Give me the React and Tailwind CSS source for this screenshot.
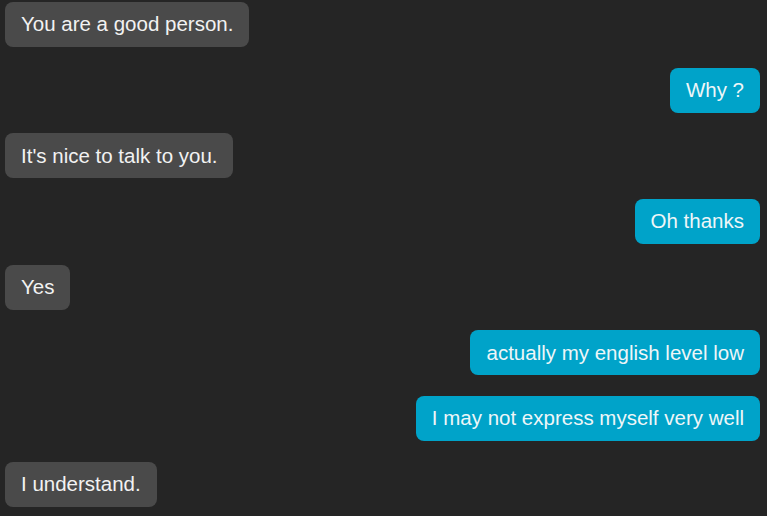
const messages = [
  { text: "You are a good person.", me: false },
  { text: "Why ?", me: true },
  { text: "It's nice to talk to you.", me: false },
  { text: "Oh thanks", me: true },
  { text: "Yes", me: false },
  { text: "actually my english level low", me: true },
  { text: "I may not express myself very well", me: true },
  { text: "I understand.", me: false },
]

function Bubble({ text, me }) {
  return (
    <div className={me ? "flex justify-end" : "flex justify-start"}>
      <div
        className={
          me
            ? "h-[45px] px-4 flex items-center rounded-lg bg-[#00a3c9] text-[#eef6f8] text-[20.5px]"
            : "h-[45px] px-4 flex items-center rounded-lg bg-[#4a4a4a] text-[#f2f2f2] text-[20.5px]"
        }
      >
        {text}
      </div>
    </div>
  )
}

export default function App() {
  return (
    <div className="h-[516px] bg-[#252525] pl-[5px] pr-[7px] pt-[2px] flex flex-col gap-[20.7px] font-['Liberation_Sans',Arial,sans-serif] overflow-hidden">
      {messages.map((m, i) => (
        <Bubble key={i} {...m} />
      ))}
    </div>
  )
}
